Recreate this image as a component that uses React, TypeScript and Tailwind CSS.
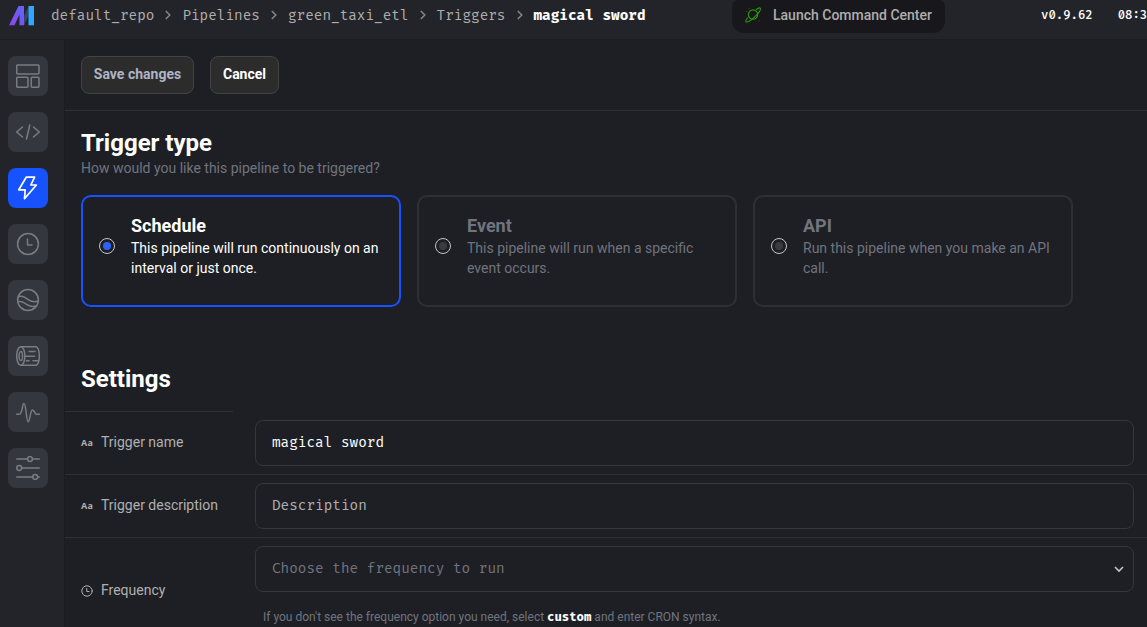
import type { ReactNode } from "react";

const MONO = "font-['Fira_Code','Liberation_Mono',monospace]";

function Svg({ children, size = 24 }: { children: ReactNode; size?: number }) {
  return (
    <svg
      width={size}
      height={size}
      viewBox="0 0 24 24"
      fill="none"
      stroke="currentColor"
      strokeWidth="1.5"
      strokeLinecap="round"
      strokeLinejoin="round"
    >
      {children}
    </svg>
  );
}

const clock = (
  <>
    <circle cx="12" cy="12" r="10.4" />
    <path d="M11.5 7v6h4.5" />
  </>
);

const navItems: { name: string; active?: boolean; icon: ReactNode }[] = [
  {
    name: "Overview",
    icon: (
      <>
        <rect x="0.7" y="0.9" width="22.3" height="9" rx="1" />
        <rect x="0.7" y="13.2" width="11.3" height="10" rx="1" />
        <rect x="15.2" y="13.2" width="7.8" height="10" rx="1" />
      </>
    ),
  },
  {
    name: "Code",
    icon: <path d="M6.5 7 0.7 12l5.8 5M17.5 7l5.8 5-5.8 5M13.8 5 10.5 19" />,
  },
  {
    name: "Triggers",
    active: true,
    icon: <path strokeWidth="1.7" d="M10.2 1.2H18.6L14.8 9H20.4L8.5 22.6L9.2 13.8H2.8Z" />,
  },
  { name: "Runs", icon: clock },
  {
    name: "Backfills",
    icon: (
      <>
        <circle cx="12" cy="12" r="10.4" />
        <path d="M2.8 8.6c4.2-1.5 6.300 1 8.900 2.700 3.400 2.200 7 3.300 10.600 1.700M1.700 13.700c4-1.200 6.300 1 8.900 2.700 3.200 2.100 6.300 2.900 9.800 1.300" />
      </>
    ),
  },
  {
    name: "Logs",
    icon: (
      <>
        <ellipse cx="4.800" cy="12" rx="4.100" ry="9.300" />
        <ellipse cx="4.800" cy="12" rx="1.700" ry="4.600" />
        <path d="M4.800 2.700H20.300C22.400 4 23.300 8 23.300 12s-.9 8-3 9.300H4.800M13 7.500h6M8.900 12.200h9.700M10.500 16.700h2.500M17 16.700h4.500" />
      </>
    ),
  },
  {
    name: "Monitor",
    icon: (
      <path d="M.7 14.200H3.200C7 14.200 5.800 3.400 8 3.400S10.200 21.800 12.200 21.800 14 9.900 16.500 9.900 18 14.200 20.500 14.200H23.300" />
    ),
  },
  {
    name: "Settings",
    icon: (
      <>
        <path d="M.7 3H11.500M16.500 3H23.300M5.700 12H23.300M.7 21H16.700M21.700 21H23.300" />
        <circle cx="14" cy="3" r="2.400" />
        <circle cx="3.200" cy="12" r="2.400" />
        <circle cx="19.200" cy="21" r="2.400" />
      </>
    ),
  },
];

function Logo() {
  return (
    <svg width="26" height="20" viewBox="0 0 26 20">
      <defs>
        <linearGradient id="logo-left" x1="0" y1="1" x2="1" y2="0">
          <stop offset="0" stopColor="#8a45ee" />
          <stop offset="1" stopColor="#5f68f7" />
        </linearGradient>
      </defs>
      <path d="M15 10 19.500 0v10L15 19.300z" fill="#34436f" />
      <path d="M9.500 0H15V19.300H10.500V8.500L5.500 19.300H0Z" fill="url(#logo-left)" />
      <path d="M19.500 0H25V19.300H19.500Z" fill="#2fa8ff" />
    </svg>
  );
}

function Planet() {
  return (
    <svg width="16" height="16" viewBox="0 0 16 16" fill="none" stroke="#2a9a0c" strokeWidth="1.100">
      <circle cx="8" cy="7.600" r="4.700" />
      <path d="M11 2.800C13 1.200 14.700.6 15.200 1.200c.9 1.200-1.700 5-5.500 8.700-3.900 3.700-7.600 5.700-8.700 4.900-.6-.6.100-2.200 1.700-4.300" />
      <path d="M3.500 1.500h1M1.200 4.500h1M13.500 14h1" strokeWidth="1" opacity=".6" />
    </svg>
  );
}

function Chevron() {
  return (
    <svg width="6" height="10" viewBox="0 0 6 10" fill="none" stroke="#85868c" strokeWidth="1.500">
      <path d="M.8 1 4.800 5 .8 9" />
    </svg>
  );
}

const crumbs = ["default_repo", "Pipelines", "green_taxi_etl", "Triggers"];

function Header() {
  return (
    <header className="flex h-10 w-full shrink-0 overflow-hidden border-b border-[#1b1c20] bg-[#232429] pl-[9px]">
      <div className="mt-1.5 w-[42px] shrink-0">
        <Logo />
      </div>
      <nav className={`flex h-[30px] w-[681px] shrink-0 items-center text-[14px] whitespace-nowrap text-[#aeaeae] ${MONO}`}>
        {crumbs.map((c) => (
          <div key={c} className="flex items-center">
            <span>{c}</span>
            <span className="flex w-[28px] justify-center">
              <Chevron />
            </span>
          </div>
        ))}
        <span className="font-bold text-white">magical sword</span>
      </nav>
      <div className="flex h-[33px] w-[213px] shrink-0 items-center rounded-b-xl rounded-t-md bg-[#18181c] pb-[3px] pl-[13px]">
        <Planet />
        <span className="ml-3 text-[14px] font-medium whitespace-nowrap text-[#aeaeae]">Launch Command Center</span>
      </div>
      <div className={`ml-24 flex h-8 shrink-0 items-center gap-[25px] text-[12px] font-medium whitespace-nowrap text-white ${MONO}`}>
        <span>v0.9.62</span>
        <span>08:3</span>
      </div>
    </header>
  );
}

function Sidebar() {
  return (
    <aside className="flex w-[65px] shrink-0 flex-col gap-4 border-r border-[#1b1c20] bg-[#232429] pt-4 pl-2">
      {navItems.map((n) => (
        <button
          key={n.name}
          aria-label={n.name}
          className={`flex size-10 shrink-0 items-center justify-center rounded-lg ${
            n.active ? "bg-[#1752ff] text-white" : "bg-[#35373e] text-[#797c85]"
          }`}
        >
          <Svg>{n.icon}</Svg>
        </button>
      ))}
    </aside>
  );
}

const types = [
  { title: "Schedule", text: "This pipeline will run continuously on an interval or just once.", active: true },
  { title: "Event", text: "This pipeline will run when a specific event occurs.", active: false },
  { title: "API", text: "Run this pipeline when you make an API call.", active: false },
];

function TypeCard({ title, text, active }: (typeof types)[number]) {
  return (
    <div
      className={`flex h-28 w-80 shrink-0 rounded-[10px] border-2 pl-4 ${
        active ? "border-[#1752ff] text-white" : "border-[#2e3036] text-[#70747f]"
      }`}
    >
      <span className="mt-[41px] flex size-4 shrink-0 items-center justify-center rounded-full border border-[#c5c5c8]">
        <span className={`size-2 rounded-full ${active ? "bg-[#2d62ff]" : "bg-[#3a3b3f]"}`} />
      </span>
      <div className="mt-[17px] ml-4 w-[255px]">
        <div className="text-[18px] leading-[24px] font-bold">{title}</div>
        <div className="text-[14px] leading-5">{text}</div>
      </div>
    </div>
  );
}

function TextGlyph() {
  return <span className="pt-0.5 font-['Open_Sans',sans-serif] text-[9px] font-bold tracking-[0.3px]">Aa</span>;
}

function Row({ icon, label, tall, children }: { icon: ReactNode; label: string; tall?: boolean; children: ReactNode }) {
  return (
    <div className={`flex ${tall ? "h-[106px]" : "h-[63px] border-b border-[#303136]"}`}>
      <div className="flex h-full w-[190px] shrink-0 items-center pb-0.5 pl-4 text-[14px] text-[#b0b0b0]">
        <span className="flex w-5 items-center">{icon}</span>
        {label}
      </div>
      <div className="mr-[13px] grow pt-2">{children}</div>
    </div>
  );
}

const field = `flex h-[46px] items-center rounded-lg border border-[#36373c] px-4 pb-[2px] text-[14px] ${MONO}`;

export default function App() {
  return (
    <div className="flex h-[627px] w-full flex-col overflow-hidden bg-[#1e1f24] font-[Roboto,sans-serif]">
      <Header />
      <div className="flex min-h-0 grow">
        <Sidebar />
        <main className="min-w-0 grow overflow-hidden">
          <div className="flex h-[71px] gap-4 border-b border-[#303136] pt-4 pl-4 text-[14px] font-bold">
            <button className="h-[38px] w-[113px] rounded-lg border border-[#434343] bg-[#2c2c2c] pb-0.5 text-[#aeb4c5]">Save changes</button>
            <button className="h-[38px] w-[69px] rounded-lg border border-[#434343] bg-[#2c2c2c] pb-0.5 text-white">Cancel</button>
          </div>
          <section className="pl-4">
            <h1 className="pt-4 text-[24px] leading-8 font-bold text-white">Trigger type</h1>
            <p className="pb-0.5 text-[14px] leading-[18px] text-[#70747f]">How would you like this pipeline to be triggered?</p>
            <div className="mt-4 flex gap-4">
              {types.map((t) => (
                <TypeCard key={t.title} {...t} />
              ))}
            </div>
            <h1 className="mt-14 text-[24px] leading-8 font-bold text-white">Settings</h1>
          </section>
          <div className="mt-4 h-px w-[168px] bg-[#303136]" />
          <Row icon={<TextGlyph />} label="Trigger name">
            <div className={`${field} text-white`}>magical sword</div>
          </Row>
          <Row icon={<TextGlyph />} label="Trigger description">
            <div className={`${field} text-[#b0b0b0]`}>Description</div>
          </Row>
          <Row
            tall
            icon={
              <span className="pt-0.5">
                <Svg size={12}>
                  <g strokeWidth="2">{clock}</g>
                </Svg>
              </span>
            }
            label="Frequency"
          >
            <div className={`${field} justify-between text-[#70747f]`}>
              <span>Choose the frequency to run</span>
              <svg className="-mr-2" width="12" height="12" viewBox="0 0 12 12" fill="none" stroke="#c5c5c8" strokeWidth="1.600">
                <path d="M2 5 6 9l4-4" />
              </svg>
            </div>
            <p className="mt-[15px] pl-2 text-[12px] leading-5 whitespace-nowrap text-[#70747f]">
              If you don't see the frequency option you need, select{" "}
              <span className={`font-bold text-white ${MONO}`}>custom</span> and enter CRON syntax.
            </p>
          </Row>
        </main>
      </div>
    </div>
  );
}
